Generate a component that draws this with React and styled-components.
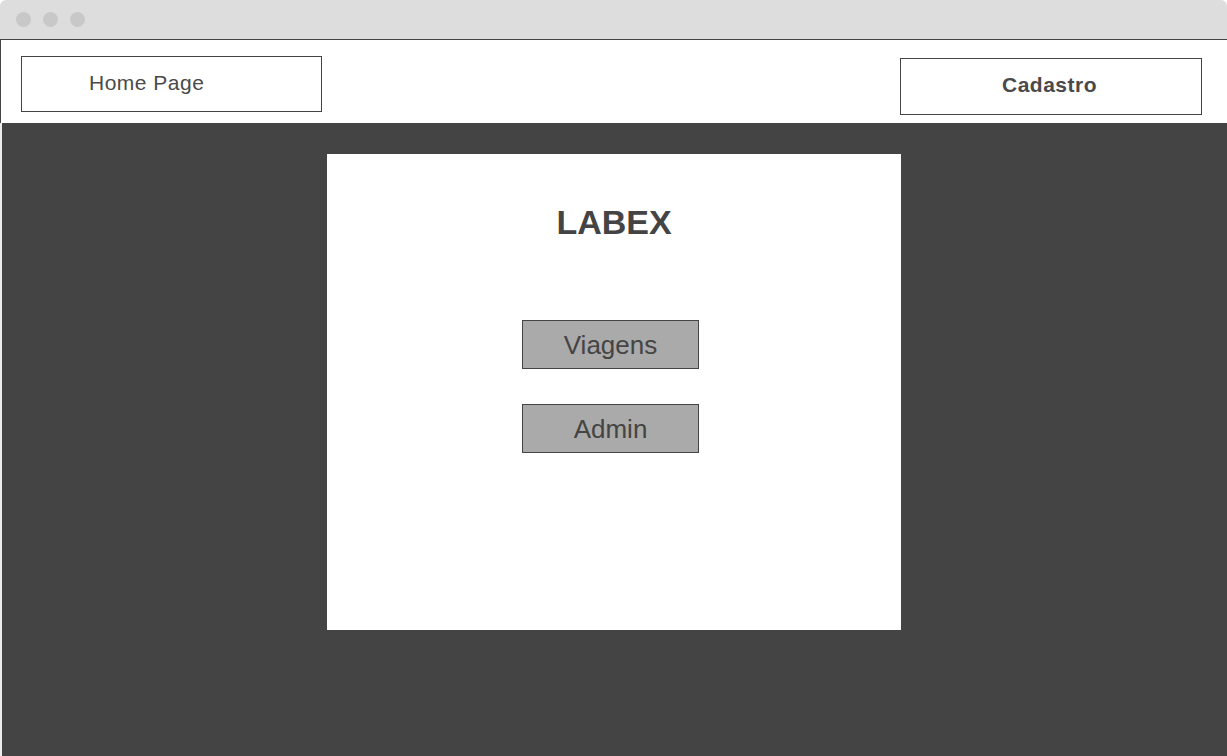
import React from "react";
import styled, { createGlobalStyle } from "styled-components";

const GlobalStyle = createGlobalStyle`
  html, body {
    margin: 0;
    padding: 0;
    background: #ffffff;
  }
  body {
    font-family: "Liberation Sans", Arial, sans-serif;
  }
`

const Window = styled.div`
  display: flex;
  flex-direction: column;
  width: 1227px;
  height: 756px;
  overflow: hidden;
`

const TitleBar = styled.div`
  display: flex;
  align-items: center;
  gap: 12px;
  height: 40px;
  padding-left: 16px;
  box-sizing: border-box;
  background: #dddddd;
  border-radius: 6px 6px 0 0;
  border-bottom: 1px solid #444444;
  flex-shrink: 0;
`

const Dot = styled.span`
  width: 15px;
  height: 15px;
  border-radius: 50%;
  background: #c8c8c8;
`

const Header = styled.header`
  display: flex;
  justify-content: space-between;
  align-items: flex-start;
  height: 83px;
  box-sizing: border-box;
  padding: 16px 25px 0 20px;
  background: #ffffff;
  border-left: 1px solid #444444;
  flex-shrink: 0;
`

const NavBox = styled.div`
  display: flex;
  align-items: center;
  justify-content: ${p => (p.$center ? "center" : "flex-start")};
  box-sizing: border-box;
  width: ${p => p.$width}px;
  height: ${p => p.$height}px;
  margin-top: ${p => p.$offset || 0}px;
  padding: ${p => (p.$center ? "0 3px 3px 0" : "0 0 2px 67px")};
  border: 1px solid #444444;
  color: #4a4a4a;
  font-size: 21px;
  letter-spacing: 0.5px;
  font-weight: ${p => (p.$bold ? 700 : 400)};
`

const Main = styled.main`
  flex: 1;
  display: flex;
  justify-content: center;
  align-items: flex-start;
  padding-right: 1px;
  background: #444444;
  border-left: 2px solid #ececec;
`

const Card = styled.section`
  display: flex;
  flex-direction: column;
  align-items: center;
  width: 574px;
  height: 476px;
  margin-top: 31px;
  background: #ffffff;
`

const Title = styled.h1`
  margin: 51px 0 0 0;
  font-size: 34px;
  line-height: 1;
  font-weight: 700;
  color: #444444;
`

const ButtonList = styled.div`
  display: flex;
  flex-direction: column;
  align-items: center;
  gap: 35px;
  margin-top: 81px;
  margin-right: 7px;
`

const MenuButton = styled.button`
  width: 177px;
  height: 49px;
  box-sizing: border-box;
  border: 1px solid #444444;
  background: #aaaaaa;
  color: #444444;
  font-family: "Liberation Sans", Arial, sans-serif;
  font-size: 26px;
  padding: 2px 0 0 0;
  cursor: pointer;
`

export default function App() {
  return (
    <>
      <GlobalStyle />
      <Window>
        <TitleBar>
          <Dot />
          <Dot />
          <Dot />
        </TitleBar>
        <Header>
          <NavBox $width={301} $height={56}>Home Page</NavBox>
          <NavBox $width={302} $height={57} $offset={2} $center $bold>
            Cadastro
          </NavBox>
        </Header>
        <Main>
          <Card>
            <Title>LABEX</Title>
            <ButtonList>
              <MenuButton>Viagens</MenuButton>
              <MenuButton>Admin</MenuButton>
            </ButtonList>
          </Card>
        </Main>
      </Window>
    </>
  );
}
